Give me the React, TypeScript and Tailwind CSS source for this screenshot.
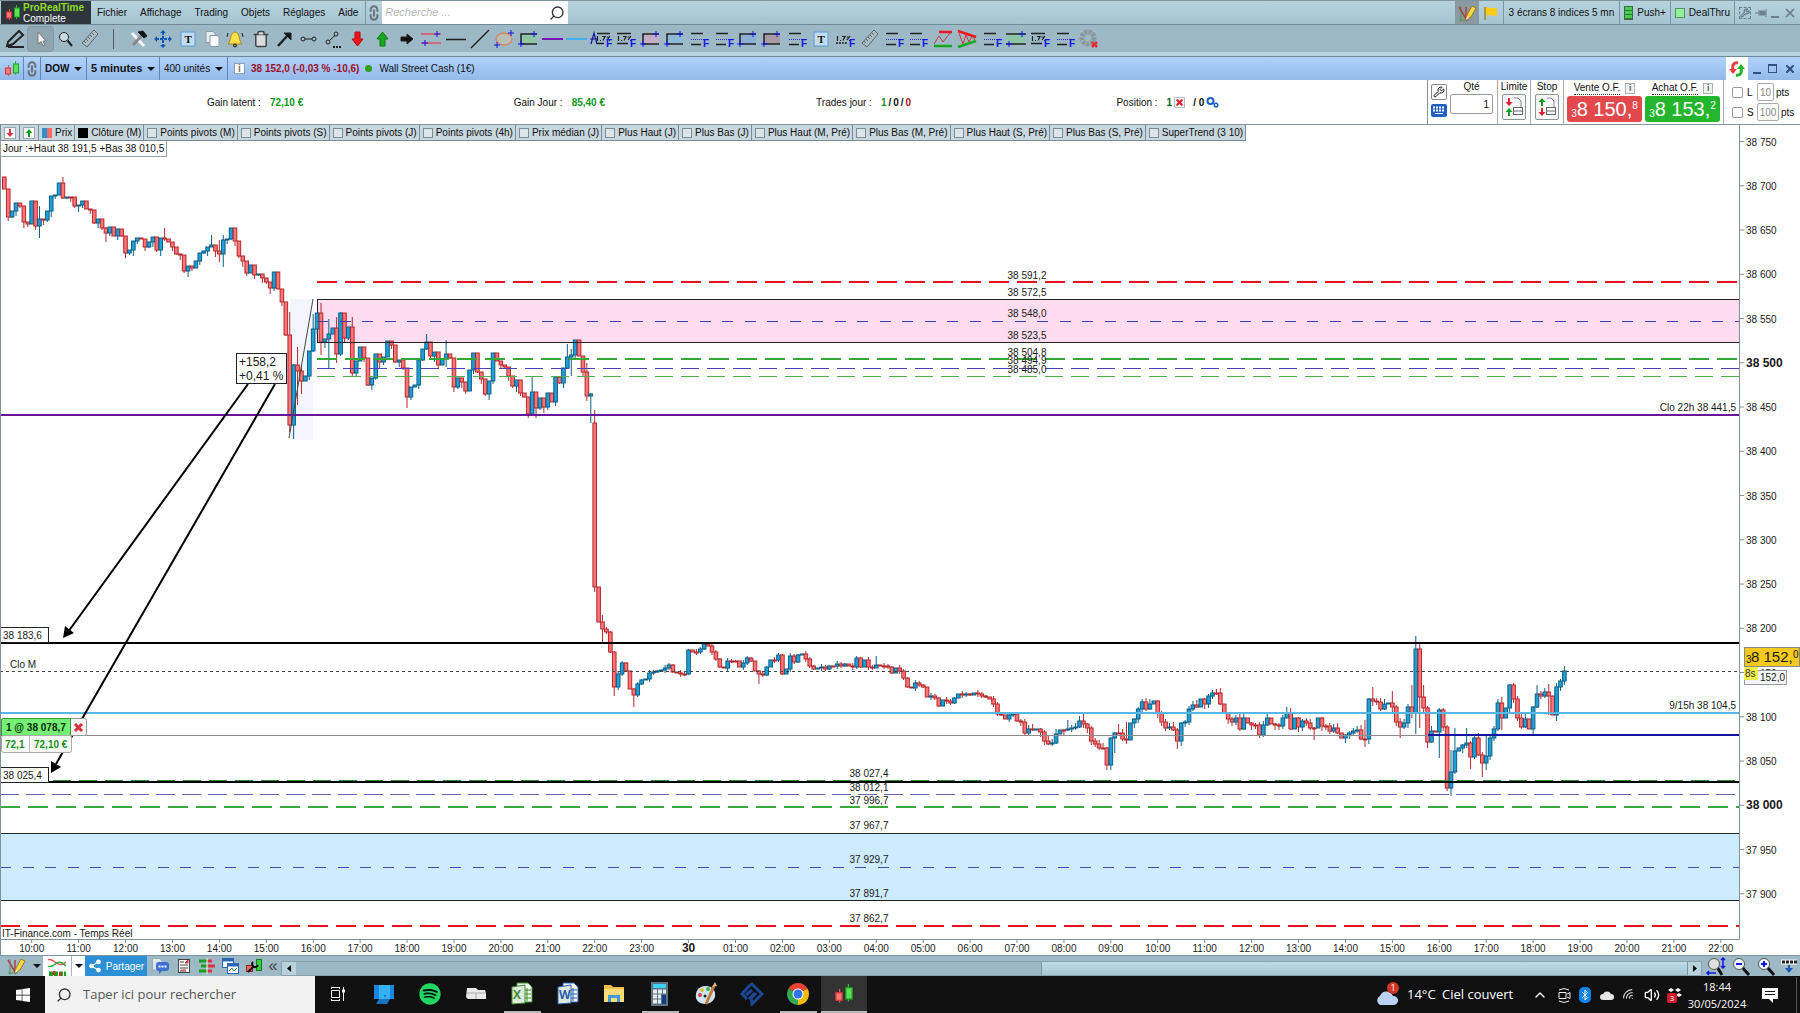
import type { ReactNode } from "react";
import {
  Bluetooth,
  ChevronUp,
  Link2,
  MessageSquareText,
  Search,
  Share2,
  Trash2,
  Volume2,
  Wifi,
  Wrench,
  X,
} from "lucide-react";
import { FaSpotify, FaWindows } from "react-icons/fa";

const SANS = "font-['Liberation_Sans',Arial,sans-serif]";
const SEGOE = "font-['Open_Sans','Noto_Sans',sans-serif]";

/* ---------- price series (chart rows, one value per 5 min close) ---------- */

const FIRST_OPEN = 177;
const CLOSES = [
  189, 217, 211, 203, 206, 222, 224, 201, 226, 219, 220, 211, 196, 195, 183, 198, 197, 197, 206, 205,
  201, 209, 210, 223, 219, 228, 233, 227, 236, 229, 236, 253, 250, 241, 238, 239, 247, 242, 237, 250,
  238, 239, 242, 247, 254, 255, 271, 266, 268, 261, 253, 251, 247, 245, 251, 254, 240, 239, 228, 241,
  256, 261, 273, 265, 275, 274, 278, 282, 288, 272, 289, 302, 335, 425, 365, 371, 381, 376, 351, 329,
  313, 342, 339, 334, 328, 354, 313, 338, 327, 373, 361, 347, 358, 385, 378, 354, 362, 357, 341, 345,
  362, 360, 368, 397, 387, 385, 360, 349, 342, 356, 352, 365, 359, 354, 358, 387, 378, 382, 391, 370,
  353, 372, 379, 394, 381, 353, 361, 365, 367, 376, 386, 380, 393, 397, 414, 392, 408, 398, 407, 393,
  402, 377, 383, 368, 357, 355, 340, 356, 372, 396, 394, 587, 622, 629, 632, 652, 687, 674, 663, 671,
  689, 695, 684, 680, 679, 673, 672, 671, 670, 668, 665, 672, 673, 674, 674, 650, 652, 652, 649, 644,
  646, 652, 659, 667, 668, 661, 661, 661, 667, 663, 658, 661, 671, 674, 675, 667, 660, 660, 655, 674,
  669, 656, 662, 655, 654, 659, 666, 669, 668, 667, 669, 666, 666, 664, 666, 664, 666, 667, 658, 667,
  660, 667, 668, 665, 666, 666, 667, 673, 668, 671, 678, 687, 688, 683, 685, 687, 697, 696, 698, 706,
  700, 701, 703, 698, 694, 695, 694, 695, 693, 694, 696, 697, 699, 704, 714, 715, 719, 715, 714, 721,
  722, 733, 729, 730, 729, 732, 741, 744, 743, 734, 730, 730, 729, 728, 727, 721, 724, 728, 741, 744,
  748, 748, 765, 738, 733, 733, 739, 740, 723, 719, 709, 702, 709, 704, 701, 713, 722, 728, 727, 730,
  741, 723, 722, 709, 705, 707, 699, 704, 696, 693, 693, 704, 713, 719, 722, 718, 729, 718, 723, 725,
  725, 735, 725, 718, 724, 725, 726, 718, 713, 729, 718, 727, 721, 723, 728, 728, 718, 726, 726, 731,
  728, 733, 738, 735, 733, 731, 730, 739, 739, 699, 701, 702, 709, 704, 703, 707, 722, 727, 723, 707,
  713, 649, 697, 708, 742, 731, 732, 710, 727, 788, 772, 751, 748, 745, 743, 757, 738, 755, 763, 756,
  738, 729, 703, 718, 708, 685, 699, 718, 727, 719, 729, 707, 694, 696, 692, 696, 715, 687, 681, 671,
];

// candles that stretch well beyond their body: index -> [high, low]
const WICKS: Record<number, [number, number]> = {
  9: [206, 238], 15: [177, 199], 26: [227, 242], 41: [228, 241], 53: [235, 246], 55: [240, 262],
  56: [235, 267], 73: [312, 432], 74: [364, 439], 75: [347, 405], 76: [366, 394], 79: [314, 352],
  81: [303, 355], 83: [319, 368], 85: [317, 363], 86: [312, 356], 89: [317, 377], 103: [368, 408],
  108: [334, 350], 113: [340, 367], 135: [377, 415], 136: [392, 418], 144: [344, 368],
  145: [349, 376], 149: [363, 401], 150: [393, 423], 151: [410, 592], 153: [615, 642],
  156: [651, 696], 161: [688, 707], 193: [670, 684], 223: [656, 668], 267: [735, 745],
  272: [720, 731], 276: [714, 728], 282: [747, 770], 284: [732, 753], 285: [724, 734],
  287: [722, 744], 300: [728, 749], 328: [707, 718], 335: [727, 740], 348: [720, 747],
  350: [687, 706], 355: [691, 712], 357: [718, 738], 359: [704, 728], 360: [685, 718],
  361: [636, 734], 362: [644, 728], 363: [685, 712], 364: [706, 748], 367: [708, 758],
  369: [725, 791], 370: [750, 796], 371: [728, 774], 374: [728, 748], 375: [741, 769],
  378: [752, 777], 379: [736, 770], 383: [697, 730], 392: [685, 708], 395: [684, 715],
  397: [683, 721], 399: [666, 685],
};

const candles = CLOSES.map((close, i) => {
  let open = i === 0 ? FIRST_OPEN : CLOSES[i - 1];
  if (i === 151) open = 423;
  const spread = i < 150 ? 7 : i < 260 ? 4 : 6;
  const top = Math.min(open, close);
  const bottom = Math.max(open, close);
  const [high, low] = WICKS[i] ?? [top - ((i * 7) % spread), bottom + ((i * 11) % spread)];
  return { x: 4.3 + i * 3.91, top, height: Math.max(1, bottom - top), high, low, up: close < open };
});

const LEVEL_LABELS: [number, number, string][] = [
  [1027, 275, "38 591,2"],
  [1027, 292, "38 572,5"],
  [1027, 313, "38 548,0"],
  [1027, 335, "38 523,5"],
  [1027, 352, "38 504,8"],
  [1027, 360, "38 494,9"],
  [1027, 369, "38 485,0"],
  [869, 773, "38 027,4"],
  [869, 787, "38 012,1"],
  [869, 800, "37 996,7"],
  [869, 825, "37 967,7"],
  [869, 859, "37 929,7"],
  [869, 893, "37 891,7"],
  [869, 918, "37 862,7"],
];

const PRICES = Array.from({ length: 18 }, (_, i) => 38750 - i * 50);

function formatPrice(p: number) {
  return `${Math.floor(p / 1000)} ${String(p % 1000).padStart(3, "0")}`;
}

const HOURS = Array.from({ length: 37 }, (_, i) => {
  const h = (10 + i) % 24;
  return h === 0 ? "30" : `${String(h).padStart(2, "0")}:00`;
});

function Level({
  y,
  x1 = 0,
  color,
  dash,
  width = 1,
}: {
  y: number;
  x1?: number;
  color: string;
  dash?: string;
  width?: number;
}) {
  return (
    <line
      x1={x1}
      x2={1739}
      y1={width === 1 ? y + 0.5 : y}
      y2={width === 1 ? y + 0.5 : y}
      stroke={color}
      strokeWidth={width}
      strokeDasharray={dash}
    />
  );
}

function PriceChart() {
  return (
    <svg
      className={`block h-full w-full overflow-visible ${SANS}`}
      viewBox="0 141 1800 814"
      preserveAspectRatio="none"
      fontSize="10"
      fill="#1a1a1a"
    >
      <g shapeRendering="crispEdges">
        <rect x="290" y="299" width="23" height="141" fill="#f4f6fd" />
        <rect x="317.5" y="299.5" width="1430" height="43" fill="#ffdcef" stroke="#222" />
        <rect x="0.5" y="833.5" width="1740" height="67" fill="#cdecff" stroke="#222" />
        <rect x="1740" y="141" width="60" height="814" fill="#fff" />
      </g>
      {candles.map((c, i) => (
        <g key={i} stroke={c.up ? "#0b5f85" : "#b3282d"} fill={c.up ? "#1f9fd6" : "#fb7476"}>
          <line x1={c.x} x2={c.x} y1={c.high} y2={c.low} />
          <rect x={c.x - 1.8} y={c.top} width="3.6" height={c.height} strokeWidth="1" />
        </g>
      ))}
      <g shapeRendering="crispEdges">
        <Level y={282} x1={317} color="#e8141c" width={2} dash="20 8" />
        <Level y={321} x1={317} color="#4040b4" dash="11 11.5" />
        <Level y={359} x1={317} color="#34a834" width={2} dash="20 8" />
        <Level y={368} x1={317} color="#4a40b8" dash="18 8" />
        <Level y={376} x1={317} color="#4caf4c" dash="18 8" />
        <Level y={342} x1={317} color="#222" />
        <Level y={415} color="#6a1599" width={2} />
        <Level y={643} color="#000" width={2} />
        <Level y={671} color="#444" dash="3 3" />
        <Level y={713} color="#58b6e4" width={2} />
        <Level y={735} color="#8c8c8c" />
        <Level y={735} x1={1428} color="#1414a0" width={2} />
        <Level y={780} x1={53} color="#3a8a3a" dash="18 8" />
        <Level y={782} color="#000" width={2} />
        <Level y={794} color="#6464b4" dash="19 7" />
        <Level y={807} color="#3aa83a" width={2} dash="20 8" />
        <Level y={867} color="#4646b4" dash="11 11.5" />
        <Level y={926} color="#e8141c" width={2} dash="20 8" />
      </g>
      <line x1="313" y1="299" x2="289" y2="438" stroke="#444" strokeWidth="1" />

      <g stroke="#000" strokeWidth="2">
        <line x1="248" y1="384" x2="68" y2="632" />
        <line x1="275" y1="384" x2="56" y2="764" />
      </g>
      <path d="M63 638 L65 626 L74 633 Z" fill="#000" />
      <path d="M51 773 L51 761 L61 767 Z" fill="#000" />

      <rect x="236.5" y="353.5" width="50" height="30" fill="#fff" stroke="#222" />
      <text x="239" y="366" fontSize="12">+158,2</text>
      <text x="239" y="380" fontSize="12">+0,41 %</text>

      {LEVEL_LABELS.map(([x, y, label]) => (
        <text key={label} x={x} y={y + 4} textAnchor="middle">
          {label}
        </text>
      ))}
      <text x="1736" y="411" textAnchor="end">Clo 22h 38 441,5</text>
      <text x="1736" y="709" textAnchor="end">9/15h 38 104,5</text>

      <rect x="0.5" y="627.5" width="48" height="15" fill="#fff" stroke="#222" />
      <text x="3" y="639">38 183,6</text>
      <rect x="0.5" y="767.5" width="48" height="15" fill="#fff" stroke="#222" />
      <text x="3" y="779">38 025,4</text>
      <text x="10" y="668">Clo M</text>

      <rect x="1.5" y="718.5" width="85" height="17" rx="2" fill="#f6f6f6" stroke="#999" />
      <path d="M1.5 735.5 V720 a2 2 0 0 1 2 -1.500 H70.500 V735.500 Z" fill="#74f074" stroke="#3f9a3f" />
      <text x="6" y="731" fontWeight="bold" fill="#0a2a0a">1 @ 38 078,7</text>
      <path d="M75 724 l7 7 m0 -7 l-7 7" stroke="#d8323a" strokeWidth="3" />
      <rect x="1.5" y="735.5" width="70" height="17" rx="2" fill="#fbfbfb" stroke="#aaa" />
      <line x1="29.5" x2="29.5" y1="736" y2="752" stroke="#bbb" />
      <g fontWeight="bold" fill="#14901a">
        <text x="5" y="748">72,1</text>
        <text x="34" y="748">72,10 €</text>
      </g>
      <text x="2" y="937">IT-Finance.com - Temps Réel</text>

      <path d="M0.5 141 V955 M0 939.500 H1739.500 V141" fill="none" stroke="#7e929c" />
      {PRICES.map((p) => {
        const y = 805.3 - (p - 38000) * 0.885;
        const round = p % 500 === 0;
        return (
          <g key={p}>
            <line x1="1740" x2="1744" y1={y} y2={y} stroke="#7e929c" />
            <text x="1746" y={y + 4} fontSize={round ? 12 : 10} fontWeight={round ? "bold" : "normal"}>
              {formatPrice(p)}
            </text>
          </g>
        );
      })}
      {HOURS.map((h, i) => {
        const x = 31.7 + i * 46.92;
        const day = h === "30";
        return (
          <g key={i}>
            <line x1={x} x2={x} y1="940" y2="943" stroke="#7e929c" />
            <text x={x} y="952" textAnchor="middle" fontSize={day ? 12 : 10} fontWeight={day ? "bold" : "normal"}>
              {h}
            </text>
          </g>
        );
      })}

      <rect x="1744.5" y="670.5" width="42" height="14" fill="#f4f6f8" stroke="#999" />
      <text x="1785" y="681" textAnchor="end">152,0</text>
      <rect x="1744" y="667" width="14" height="13" fill="#f4ee50" />
      <text x="1745" y="677" fill="#333">8s</text>
      <rect x="1744.5" y="647.500" width="55" height="19" fill="#f7c81e" stroke="#8a8a8a" />
      <text x="1746" y="663" fontSize="10">3</text>
      <text x="1751" y="662" fontSize="15">8 152,</text>
      <text x="1793" y="658" fontSize="10">0</text>
    </svg>
  );
}

/* ---------- toolbar glyphs, drawn on a 24x20 grid ---------- */

function Glyph({ children }: { children: ReactNode }) {
  return (
    <svg className="h-5 w-6" viewBox="0 0 24 20" fill="none" stroke="#222">
      {children}
    </svg>
  );
}

const FLetter = () => (
  <text x="16" y="18" fontSize="10" fontWeight="bold" fill="#1414e6" stroke="none">F</text>
);

const plus = (x: number, y: number) => <path d={`M${x - 3} ${y} h6 M${x} ${y - 3} v6`} stroke="#1414e6" />;

// tiny percentage caption, only hinted at this size
const scribble = <path d="M4.500 7 v5 M7 11.500 h1 M9 7.500 h3 l-2 4 M13.500 8 h2 M14 11 l3 -4 M16 11.500 h1" strokeWidth="1.200" />;

const levelsF = (
  <Glyph>
    <path d="M4 4.500 H16 M4 15.500 H14" strokeWidth="1.500" />
    <path d="M4 10.500 H17" stroke="#2a2ae0" strokeDasharray="1 1" />
    <FLetter />
  </Glyph>
);

const labelF = (
  <Glyph>
    <path d="M3 4.500 H17 M3 14.500 H14" strokeWidth="1.500" />
    {scribble}
    <FLetter />
  </Glyph>
);

const zone = (fill: string) => (
  <Glyph>
    <rect x="4" y="5" width="16" height="10" fill={fill} stroke="none" />
    <path d="M20 5 H4 V15 H20" strokeWidth="1.500" />
    {plus(17, 5)}
    {plus(4, 15)}
  </Glyph>
);

const ruler = (
  <Glyph>
    <path d="M4 14 L16 1 L20 5 L9 18 Z" fill="#a9bcc4" stroke="#5f686d" />
    <path d="M8 10 l2 2 M10 8 l2 2 M12 6 l2 2 M14 4 l2 2 M6 12 l2 2" stroke="#5f686d" />
  </Glyph>
);

const textTool = (
  <Glyph>
    <rect x="5" y="3" width="14" height="14" fill="#c3dbee" stroke="#5b9bd8" />
    <text x="8.500" y="14" fontSize="11" fontWeight="bold" fill="#111" stroke="none" className="font-['Liberation_Serif',serif]">T</text>
  </Glyph>
);

const TOOLS: [string, ReactNode][] = [
  ["Crayon", <Glyph><path d="M5 13 L16 2 L20 6 L10 15 L4 17 Z M4 17 L9 16" strokeWidth="2" /><path d="M5 18 H21" strokeWidth="2" /></Glyph>],
  ["Pointeur", <Glyph><path d="M9 3 V15 L12 12.500 L14 17 L16 16 L14 12 H17 Z" fill="#f4f4f4" stroke="#777" /></Glyph>],
  ["Zoom", <Glyph><circle cx="10" cy="8" r="4.500" fill="#c8dde4" /><path d="M13.500 11.500 L18 17" strokeWidth="2" /></Glyph>],
  ["Règle", ruler],
  ["Séparateur", <Glyph><path d="M10.500 0 V20" stroke="#4d5c64" /></Glyph>],
  ["Outils", <Glyph><path d="M5 4 L17 17" stroke="#f4f4f4" strokeWidth="3" /><path d="M17 4 L6 16" strokeWidth="3" stroke="#8b8b8b" /><path d="M11 3 L16 2 L20 7 L17 9 Z" fill="#111" /></Glyph>],
  ["Déplacer", <Glyph><path d="M12 3 V17 M5 10 H19" stroke="#1559b8" strokeWidth="2" strokeDasharray="3 1" /><path d="M12 1 l3 3 h-6 Z M12 19 l3 -3 h-6 Z M3 10 l3 -3 v6 Z M21 10 l-3 -3 v6 Z" fill="#1559b8" stroke="none" /></Glyph>],
  ["Texte", textTool],
  ["Copier", <Glyph><path d="M6 2.500 h7 l2 2 v9 h-9 Z" fill="#e8eef0" stroke="#8a9aa2" /><path d="M10 6.500 h7 l2 2 v9 h-9 Z" fill="#fff" stroke="#8a9aa2" /></Glyph>],
  ["Alarme", <Glyph><path d="M4 15 C7 13 6 3 11 3 C16 3 15 13 18 15 Z" fill="#ffe04a" stroke="#a88a10" /><circle cx="11" cy="16.500" r="1.500" fill="#a88a10" /><path d="M4 4 l-1 4 M18 4 l1 4" /></Glyph>],
  ["Supprimer", <Trash2 className="h-[18px] w-[18px] fill-[#d9dddd] text-[#444]" strokeWidth={2} />],
  ["Flèche", <Glyph><path d="M5 17 L15 6" strokeWidth="2.500" /><path d="M11 4 h7 v7 Z" fill="#111" /></Glyph>],
  ["Segment", <Glyph><circle cx="6" cy="10" r="2" /><circle cx="17" cy="10" r="2" /><path d="M8 10 H15" /></Glyph>],
  ["Demi-droite", <Glyph><circle cx="6" cy="13" r="2" /><circle cx="14" cy="5" r="2" /><path d="M7.500 11.500 L13 6.500" /><path d="M11 18 H20" strokeWidth="2" strokeDasharray="2 1" /></Glyph>],
  ["Flèche bas", <Glyph><path d="M9 3 h5 v7 h3 l-5.500 7 l-5.500 -7 h3 Z" fill="#f0141c" stroke="#b00d12" /></Glyph>],
  ["Flèche haut", <Glyph><path d="M9 17 h5 v-7 h3 l-5.500 -7 l-5.500 7 h3 Z" fill="#17a81d" stroke="#0f7a14" /></Glyph>],
  ["Flèche droite", <Glyph><path d="M6 8 h6 v-3 l6 5 l-6 5 v-3 h-6 Z" fill="#111" /></Glyph>],
  ["Canal", <Glyph><path d="M2 5 H22 M2 14 H22" stroke="#d06a78" strokeWidth="2" />{plus(18, 5)}{plus(6, 14)}</Glyph>],
  ["Horizontale", <Glyph><path d="M2 10.500 H22" strokeWidth="1.500" /></Glyph>],
  ["Oblique", <Glyph><path d="M3 19 L21 1" strokeWidth="1.500" /></Glyph>],
  ["Ellipse", <Glyph><ellipse cx="12" cy="10" rx="8" ry="6" fill="#b9bfb8" stroke="#d28a6a" strokeWidth="1.500" />{plus(19, 4)}{plus(5, 16)}</Glyph>],
  ["Zone verte", zone("#8fc4a4")],
  ["Ligne violette", <Glyph><path d="M1 10 H22" stroke="#7a12b8" strokeWidth="2" /></Glyph>],
  ["Ligne bleue", <Glyph><path d="M1 10 H22" stroke="#3fb0ee" strokeWidth="2" /></Glyph>],
  ["Label A", <Glyph><path d="M1 15 L4 4 L7 15 M0 10 H7" stroke="#1414a0" strokeWidth="1.200" /><path d="M7 4.500 H20 M7 14.500 H14" strokeWidth="1.500" /><g transform="translate(3 0)">{scribble}</g><FLetter /></Glyph>],
  ["Label B", labelF],
  ["Zone rose", zone("#c4adc6")],
  ["Zone cyan", zone("#8cbbd8")],
  ["Niveaux 1", levelsF],
  ["Niveaux 2", levelsF],
  ["Zone bleue", zone("#8fb0d6")],
  ["Zone brune", zone("#a89ba4")],
  ["Niveaux 3", levelsF],
  ["Texte 2", textTool],
  ["Label C", <Glyph>{scribble}<path d="M3 14 H14" strokeWidth="1.500" strokeDasharray="2 1" /><FLetter /></Glyph>],
  ["Règle 2", ruler],
  ["Niveaux 4", levelsF],
  ["Niveaux 5", levelsF],
  ["Tendance", <Glyph><path d="M8 3 H21" stroke="#f0141c" strokeWidth="2.500" /><path d="M3 17 H21" stroke="#17a81d" strokeWidth="2.500" /><path d="M3 15 L8 7 L12 13 L19 4" stroke="#c83c3c" /></Glyph>],
  ["Triangle", <Glyph><path d="M3 2 L21 8" stroke="#f0141c" strokeWidth="2.500" /><path d="M3 18 L21 12" stroke="#17a81d" strokeWidth="2.500" /><path d="M4 4 L8 15 L11 6 L14 13 L17 7 L20 11" stroke="#c83c3c" /></Glyph>],
  ["Niveaux 6", levelsF],
  ["Canal vert", <Glyph><rect x="3" y="5" width="18" height="10" fill="#8fc4a4" stroke="none" /><path d="M2 5 H22 M2 15 H22" strokeWidth="1.500" />{plus(18, 5)}{plus(5, 15)}</Glyph>],
  ["Label D", labelF],
  ["Niveaux 7", levelsF],
  ["Réinitialiser", <Glyph><circle cx="11" cy="9" r="6" stroke="#8b969b" strokeWidth="5" strokeDasharray="3 1" /><path d="M15 13 l5 5 m0 -5 l-5 5" stroke="#e03038" strokeWidth="2.500" /></Glyph>],
];

function CandleLogo({ className }: { className: string }) {
  return (
    <svg className={className} viewBox="0 0 16 16">
      <path d="M4.500 4 V15" stroke="#e05555" />
      <rect x="1.500" y="7" width="5" height="6" fill="#f47a7a" stroke="#d33" />
      <path d="M11.500 0 V14" stroke="#35b535" />
      <rect x="9.500" y="3" width="5" height="9" fill="#5ee05e" stroke="#1fa01f" />
    </svg>
  );
}

function ChartPencil() {
  return (
    <svg className="h-5 w-5" viewBox="0 0 20 20" fill="none">
      <path d="M2 17 H12 M4 3 V19" stroke="#4b9b58" />
      <path d="M2 4 L9 16 V4" stroke="#a8434a" strokeWidth="1.500" />
      <path d="M9 17 L10 12 L15 3 L19 5 L14 14 Z" fill="#ffd84a" stroke="#9a7a1c" />
      <path d="M9 17 L10 13 L12 15 Z" fill="#f6e6c0" />
    </svg>
  );
}

const Chain = () => <Link2 className="h-4 w-4 rotate-90 text-[#6b7479]" strokeWidth={3} />;

const Caret = () => (
  <svg className="h-1 w-2" viewBox="0 0 8 4">
    <path d="M0 0 H8 L4 4 Z" fill="#111" />
  </svg>
);

function Divider() {
  return <span className="h-full w-px bg-[#7b97a3]" />;
}

function MenuBar() {
  return (
    <header className="flex h-6 items-center border-t border-[#7f959e] bg-linear-to-b from-[#b7d3df] to-[#a3c3d0]">
      <div className="ml-px flex h-full w-[90px] items-center bg-[#2e363b] pl-1">
        <CandleLogo className="h-4 w-4" />
        <div className="ml-[2px] leading-[11px]">
          <div className="font-bold text-[#8fd92b]">ProRealTime</div>
          <div className="text-white">Complete</div>
        </div>
      </div>
      <nav className="flex gap-[13px] pr-[7px] pl-[6px]">
        {["Fichier", "Affichage", "Trading", "Objets", "Réglages", "Aide"].map((m) => (
          <button key={m} type="button">{m}</button>
        ))}
      </nav>
      <Divider />
      <Chain />
      <label className="flex h-full w-[186px] items-center bg-white px-[3px]">
        <input
          aria-label="Recherche"
          placeholder="Recherche ..."
          className="min-w-0 flex-1 text-[11px] italic outline-none placeholder:text-[#b9b9b9]"
        />
        <Search className="h-4 w-4 -scale-x-100 text-[#333]" strokeWidth={2} />
      </label>
      <div className="ml-auto flex h-full items-center">
        <button type="button" aria-label="Dessin" className="flex h-full w-6 items-center justify-center bg-[#8b9aa1]">
          <ChartPencil />
        </button>
        <button type="button" aria-label="Drapeau" className="flex w-6 justify-center">
          <svg className="h-[14px] w-[14px]" viewBox="0 0 14 14">
            <path d="M1 1 V14" stroke="#a98a1a" strokeWidth="1.500" />
            <path d="M2 1 L7 2 L13 2 V10 L7 9.500 L2 8.500 Z" fill="#ffcb1c" />
          </svg>
        </button>
        <Divider />
        <button type="button" className="px-[5px]">3 écrans 8 indices 5 mn</button>
        <Divider />
        <button type="button" className="flex items-center gap-1 px-1">
          <span className="flex h-[14px] w-[9px] flex-col gap-px border border-[#3d6d45] bg-[#3d6d45]">
            <span className="flex-1 bg-[#43cf4b]" />
            <span className="flex-1 bg-[#43cf4b]" />
            <span className="flex-1 bg-[#43cf4b]" />
          </span>
          Push+
        </button>
        <Divider />
        <button type="button" className="flex items-center gap-1 px-1">
          <span className="h-[10px] w-[10px] border border-[#5c8f66] bg-[#8ff09a]" />
          DealThru
        </button>
        <Divider />
        <div className="flex h-full items-center gap-1 px-1 pr-[3px] text-[#6c818b]">
          <Wrench className="h-3 w-3 border border-dashed border-[#6c818b]" strokeWidth={3} />
          <svg className="h-2 w-3" viewBox="0 0 12 8"><path d="M0 4 H4 M4 1 V7 M5 2 H10 V6 H5 Z M11 0 V8" stroke="#6c818b" fill="#6c818b" /></svg>
          <span className="mt-2 h-[2px] w-2 bg-[#6c818b]" />
          <X className="h-[14px] w-[14px]" strokeWidth={3} />
        </div>
      </div>
    </header>
  );
}

function ToolBar() {
  return (
    <div className="flex h-7 items-center border-t border-[#6f8893] bg-[#9cb9c5] pl-[3px]">
      <div className="flex w-[1098px]">
        {TOOLS.map(([name, glyph], i) => (
          <button
            key={name}
            type="button"
            aria-label={name}
            className={`flex h-[26px] flex-1 items-center justify-center ${i === 1 ? "rounded-sm border border-[#8197a1] bg-[#8fa5af]" : ""}`}
          >
            {glyph}
          </button>
        ))}
      </div>
    </div>
  );
}

function TitleSelect({ value, label, className }: { value: string; label: string; className: string }) {
  return (
    <label className="flex h-full items-center gap-1 border-r border-[#5f87b8] px-1">
      <select aria-label={label} className={`appearance-none bg-transparent outline-none ${className}`}>
        <option>{value}</option>
      </select>
      <Caret />
    </label>
  );
}

function ChartTitle() {
  return (
    <div className="mt-1 flex h-6 items-center border-t border-[#6f8893] bg-linear-to-b from-[#b0d3fd] to-[#93b9ea]">
      <span className="flex h-full w-6 items-center justify-center border-r border-[#5f87b8]">
        <CandleLogo className="h-4 w-4" />
      </span>
      <span className="flex h-full w-[17px] items-center justify-center border-r border-[#5f87b8]">
        <Chain />
      </span>
      <TitleSelect label="Valeur" value="DOW" className="font-bold" />
      <TitleSelect label="Unité de temps" value="5 minutes" className="text-[11px] font-bold" />
      <TitleSelect label="Historique" value="400 unités" className="" />
      <span className="ml-[6px] flex h-[11px] w-[11px] items-center justify-center border border-[#8fa3b5] bg-white font-bold text-[#777]">i</span>
      <span className="ml-[6px] font-bold text-[#a01028]">38 152,0 (-0,03 % -10,6)</span>
      <span className="ml-[6px] h-[7px] w-[7px] rounded-full bg-[#2f9e12]" />
      <span className="ml-[7px]">Wall Street Cash (1€)</span>
      <div className="ml-auto flex h-full items-center">
        <button type="button" aria-label="Actualiser" className="flex h-full w-[22px] items-center justify-center bg-white">
          <svg className="h-4 w-[18px]" viewBox="0 0 18 16" fill="none" strokeWidth="3">
            <path d="M10 2 C5 1 4 5 5 10" stroke="#ee4040" />
            <path d="M1 8 H9 L5 13 Z" fill="#ee4040" />
            <path d="M8 14 C13 15 14 11 13 7" stroke="#1eb32b" />
            <path d="M9 8 H17 L13 3 Z" fill="#1eb32b" />
          </svg>
        </button>
        <div className="flex w-[52px] items-center justify-center gap-[7px] text-[#31507c]">
          <span className="mt-2 h-[2px] w-2 bg-[#31507c]" />
          <span className="h-[9px] w-[9px] border border-t-2 border-[#31507c]" />
          <X className="h-3 w-3" strokeWidth={4} />
        </div>
      </div>
    </div>
  );
}

function Info() {
  return (
    <span className="flex h-[11px] w-[10px] items-center justify-center border border-[#aab2b6] bg-[#f2f2f2] text-[9px] leading-none font-bold text-[#666]">i</span>
  );
}

function Stat({ label, children }: { label: string; children: ReactNode }) {
  return (
    <div className="flex flex-1 items-center justify-center gap-[9px]">
      <span>{label}</span>
      <span className="flex items-center gap-[2px] font-bold">{children}</span>
    </div>
  );
}

function OrderType({ label, first, second }: { label: string; first: string; second: string }) {
  return (
    <div className="flex h-full w-[33px] flex-col items-center border-r border-[#aaa]">
      <span className="leading-[14px]">{label}</span>
      <button type="button" aria-label={label} className="flex h-[26px] w-6 items-center justify-center rounded-xs border border-[#8b959a] bg-[#f7f7f7]">
        <svg className="h-5 w-5" viewBox="0 0 20 20" fill="none">
          <path d="M10 1 H14 L17 4 V10" stroke="#889" />
          <rect x="9.500" y="10.500" width="9" height="7" fill="#fff" stroke="#667" />
          <path d="M9 14 H19" stroke="#667" />
          <path d={label === "Limite" ? "M5 9 L1.500 5 H4 V1 H6 V5 H8.500 Z" : "M5 1 L1.500 5 H4 V9 H6 V5 H8.500 Z"} fill={first} />
          <path d={label === "Limite" ? "M5 11 L1.500 15 H4 V19 H6 V15 H8.500 Z" : "M5 19 L1.500 15 H4 V11 H6 V15 H8.500 Z"} fill={second} />
        </svg>
      </button>
    </div>
  );
}

function Quote({ side, big, tenth, className }: { side: string; big: string; tenth: string; className: string }) {
  return (
    <div className="flex flex-col">
      <div className="flex h-4 items-center justify-center gap-[5px]">
        <span className="border-b border-dotted border-[#333] leading-3">{side}</span>
        <Info />
      </div>
      <button type="button" className={`flex h-[26px] w-[75px] items-center justify-center rounded-[3px] text-white ${className}`}>
        <span className="mt-2">3</span>
        <span className="text-[20px]">{big}</span>
        <span className="mb-2">{tenth}</span>
      </button>
    </div>
  );
}

function Offset({ name, value, className }: { name: string; value: string; className: string }) {
  return (
    <div className="flex h-5 items-center">
      <label className="flex w-[25px] items-center gap-1">
        <input type="checkbox" className="h-[11px] w-[11px] appearance-none rounded-[2px] border border-[#999] bg-white" />
        {name}
      </label>
      <input
        aria-label={`${name} points`}
        defaultValue={value}
        className={`h-[18px] rounded-[2px] border border-[#aaa] text-center text-[#888] outline-none ${className}`}
      />
      <span className="ml-[2px]">pts</span>
    </div>
  );
}

function TradePanel() {
  return (
    <div className="flex h-[45px] border-b border-[#8796a0] bg-white">
      <div className="flex flex-1 items-center pr-[107px] pl-[103px]">
        <Stat label="Gain latent :">
          <span className="text-[#0e9a1d]">72,10 €</span>
        </Stat>
        <Stat label="Gain Jour :">
          <span className="text-[#0e9a1d]">85,40 €</span>
        </Stat>
        <Stat label="Trades jour :">
          <span className="text-[#0e9a1d]">1</span>/<span>0</span>/<span className="text-[#b01020]">0</span>
        </Stat>
        <Stat label="Position :">
          <span className="text-[#0a6a14]">1</span>
          <span className="flex h-[11px] w-[11px] items-center justify-center border border-[#b9b9c9]">
            <X className="h-[9px] w-[9px] text-[#e02030]" strokeWidth={6} />
          </span>
          <span className="ml-[6px]">/ 0</span>
          <svg className="h-3 w-[13px]" viewBox="0 0 13 12" fill="none" stroke="#1b5fc0">
            <circle cx="4.500" cy="5" r="3" strokeWidth="2" />
            <circle cx="10" cy="9" r="1.800" strokeWidth="1.500" />
          </svg>
        </Stat>
      </div>
      <div className="flex w-[373px] border-l border-[#8796a0] pl-[3px]">
        <div className="flex w-4 flex-col gap-1 pt-1">
          <button type="button" aria-label="Configurer" className="flex h-4 w-4 items-center justify-center rounded-[2px] border border-[#888]">
            <Wrench className="h-3 w-3" strokeWidth={2} />
          </button>
          <button type="button" aria-label="Clavier" className="h-[13px] w-4 rounded-[2px] bg-[#1f5fc0] p-[2px]">
            <svg className="h-full w-full" viewBox="0 0 12 9">
              <path d="M0 1.500 H12 M0 4.500 H12" stroke="#fff" strokeWidth="2" strokeDasharray="2 1" />
              <path d="M2 7.500 H10" stroke="#fff" />
            </svg>
          </button>
        </div>
        <label className="ml-[3px] flex w-[48px] flex-col items-center border-r border-[#aaa] pr-1">
          <span className="leading-[14px]">Qté</span>
          <input defaultValue="1" className="h-5 w-[43px] rounded-[2px] border border-[#999] pr-[3px] text-right outline-none" />
        </label>
        <OrderType label="Limite" first="#e02030" second="#14a01e" />
        <OrderType label="Stop" first="#14a01e" second="#e02030" />
        <div className="flex gap-[3px] pr-[3px] pl-[3px]">
          <Quote side="Vente O.F." big="8 150," tenth="8" className="bg-[#e2484c]" />
          <Quote side="Achat O.F." big="8 153," tenth="2" className="bg-[#23b52b]" />
        </div>
        <div className="flex flex-col justify-between border-l border-[#aaa] py-[2px] pl-[8px]">
          <Offset name="L" value="10" className="w-[17px]" />
          <Offset name="S" value="100" className="w-[22px]" />
        </div>
      </div>
    </div>
  );
}

const INDICATORS = [
  "Points pivots (M)",
  "Points pivots (S)",
  "Points pivots (J)",
  "Points pivots (4h)",
  "Prix médian (J)",
  "Plus Haut (J)",
  "Plus Bas (J)",
  "Plus Haut (M, Pré)",
  "Plus Bas (M, Pré)",
  "Plus Haut (S, Pré)",
  "Plus Bas (S, Pré)",
  "SuperTrend (3 10)",
];

const CHIP = "flex h-full items-center gap-[3px] border-r border-[#7c8d96] pr-[3px] pl-[3px]";
const CHIP_TIGHT = "flex h-full items-center gap-[3px] border-r border-[#7c8d96] pr-[2px] pl-[3px]";

function ArrowChip({ up }: { up: boolean }) {
  return (
    <button type="button" aria-label={up ? "Monter" : "Descendre"} className={CHIP}>
      <svg className="h-3 w-3" viewBox="0 0 12 12">
        <rect x="0.500" y="0.500" width="11" height="11" fill="#fff" stroke="#98a6ad" />
        <path d={up ? "M6 2 L9.500 6 H7 V10 H5 V6 H2.500 Z" : "M6 10 L9.500 6 H7 V2 H5 V6 H2.500 Z"} fill={up ? "#14a01e" : "#e03040"} />
      </svg>
    </button>
  );
}

function IndicatorRow() {
  return (
    <div className="flex h-4 justify-between">
      <div className="flex border-b border-l border-[#7c8d96] bg-[#c9d7de]">
        <ArrowChip up={false} />
        <ArrowChip up />
        <div className={CHIP_TIGHT}>
          <span className="flex h-[10px] w-[10px]">
            <span className="flex-1 bg-[#2f8fc8]" />
            <span className="flex-1 bg-[#f56a6a]" />
          </span>
          Prix
        </div>
        <div className={CHIP_TIGHT}>
          <span className="h-[10px] w-[10px] bg-black" />
          Clôture (M)
        </div>
        {INDICATORS.map((name) => (
          <label key={name} className={CHIP_TIGHT}>
            <input type="checkbox" className="h-[10px] w-[10px] appearance-none border border-[#7c8d96] bg-[#dce6ea]" />
            {name}
          </label>
        ))}
      </div>
      <div className="w-[61px] border-l border-[#7e929c]" />
    </div>
  );
}

function ZoomIcon({ sign }: { sign: string }) {
  return (
    <svg className="h-5 w-5" viewBox="0 0 20 20">
      <path d="M11 11 L18 19" stroke="#111" strokeWidth="3" />
      <circle cx="8" cy="8" r="5.500" fill="#eef4f6" stroke="#555" />
      <path d={sign} stroke="#1414e6" strokeWidth="2" />
    </svg>
  );
}

function BottomBar() {
  return (
    <div className="flex h-[21px] items-center border-t border-[#7b97a3] bg-[#9cb9c5]">
      <button type="button" aria-label="Dessins" className="flex w-[31px] justify-center">
        <ChartPencil />
      </button>
      <button type="button" aria-label="Plus de dessins" className="flex w-3 justify-center">
        <Caret />
      </button>
      <button type="button" aria-label="Indicateurs" className="flex h-full w-7 items-center justify-center bg-white">
        <svg className="h-5 w-5" viewBox="0 0 20 20" fill="none">
          <path d="M1 4 C6 0 10 14 19 6" stroke="#e05050" strokeWidth="1.500" />
          <path d="M1 10 C6 14 10 0 19 10" stroke="#2fae3c" strokeWidth="1.500" />
          <path d="M2 18 H19" stroke="#16a01e" strokeWidth="5" strokeDasharray="4 1" />
          <path d="M7 15 v4 M13 16 v4" stroke="#e02828" strokeWidth="2" />
        </svg>
      </button>
      <button type="button" aria-label="Plus d'indicateurs" className="flex h-full w-[14px] items-center justify-center border-l border-[#9cb9c5] bg-white">
        <Caret />
      </button>
      <button type="button" className="flex h-full w-[62px] items-center justify-center gap-1 bg-[#2b90d6] text-white">
        <Share2 className="h-[14px] w-[14px] fill-white" strokeWidth={2} />
        Partager
      </button>
      <div className="flex items-center pl-[2px]">
        <svg className="h-4 w-[23px]" viewBox="0 0 23 16">
          <path d="M3.500 0.500 H11 L13 3 V12 H3.500 Z" fill="#dfe8ec" stroke="#9aabb2" />
          <rect x="7" y="4" width="13" height="9" rx="3" fill="#3f6fd0" />
          <path d="M10 12 V16 L14 12 Z" fill="#3f6fd0" />
          <path d="M9.500 8.500 H18" stroke="#fff" strokeWidth="2" strokeDasharray="2 1" />
        </svg>
        <svg className="h-4 w-[23px]" viewBox="0 0 23 16">
          <rect x="6.500" y="1.500" width="11" height="13" fill="#fff" stroke="#444" />
          <path d="M8 4 H12 M8 7 H16 M8 10 H16 M8 13 H14" stroke="#444" />
          <path d="M13 5 l3 -3 v3 Z M9 12 h5" stroke="#e03040" fill="#e03040" />
        </svg>
        <svg className="h-4 w-[23px]" viewBox="0 0 23 16">
          <path d="M4 3 H12 M6 8 H12 M4 13 H12" stroke="#14a01e" strokeWidth="3" />
          <path d="M12 3 H17 M12 8 H20 M12 13 H17" stroke="#e03040" strokeWidth="3" />
          <path d="M12 0 V16" stroke="#fff" />
        </svg>
        <svg className="h-4 w-6" viewBox="0 0 24 16">
          <rect x="4.500" y="0.500" width="11" height="9" fill="#fff" stroke="#2a66b8" />
          <path d="M4 2 H16" stroke="#2a66b8" strokeWidth="3" />
          <rect x="9.500" y="5.500" width="11" height="10" fill="#fff" stroke="#2a66b8" />
          <path d="M9 7 H21" stroke="#2a66b8" strokeWidth="3" />
          <path d="M11 13 l3 -3 l2 3 l3 -3" stroke="#2a9a3a" fill="none" />
        </svg>
        <svg className="h-4 w-[23px]" viewBox="0 0 23 16">
          <rect x="4.500" y="7.500" width="6" height="6" fill="#f06a6a" stroke="#a02020" />
          <rect x="14.500" y="1.500" width="5" height="11" fill="#35cf3d" stroke="#1a7a20" />
          <path d="M6 14 L12 8 M11 4 a3 3 0 1 0 5 3" stroke="#111" strokeWidth="2" fill="none" />
        </svg>
      </div>
      <span className="w-4 text-center text-[16px] leading-none text-[#444]">«</span>
      <div className="mt-1 flex h-[15px] flex-1 border border-[#86a3af] bg-[#9cb9c5]">
        <button type="button" aria-label="Gauche" className="flex w-[14px] items-center justify-center bg-[#b9d3dd]">
          <svg className="h-[7px] w-1" viewBox="0 0 4 7"><path d="M4 0 V7 L0 3.500 Z" fill="#111" /></svg>
        </button>
        <div className="flex-[746]" />
        <div className="flex-[645] border-l border-[#7b97a3] bg-linear-to-b from-[#bfdde6] to-[#a4c5d1]" />
        <button type="button" aria-label="Droite" className="flex w-[14px] items-center justify-center border-l border-[#7b97a3] bg-[#b9d3dd]">
          <svg className="h-[7px] w-1" viewBox="0 0 4 7"><path d="M0 0 V7 L4 3.500 Z" fill="#111" /></svg>
        </button>
      </div>
      <div className="flex w-[98px] items-center justify-between pr-[3px] pl-1">
        <svg className="h-5 w-5" viewBox="0 0 20 20">
          <path d="M11 11 L16 19" stroke="#111" strokeWidth="3" />
          <circle cx="8" cy="8" r="5.500" fill="#e0e0e0" stroke="#555" />
          <path d="M17 3 V11 M15 4 l2 -2 l2 2 M15 10 l2 2 l2 -2 M2 17 H10 M3 15 l-2 2 l2 2" stroke="#1414e6" strokeWidth="1.500" fill="none" />
        </svg>
        <ZoomIcon sign="M5 8 H11" />
        <ZoomIcon sign="M5 8 H11 M8 5 V11" />
        <svg className="h-4 w-4" viewBox="0 0 16 16">
          <path d="M0 4 H16" stroke="#fff" strokeWidth="5" />
          <path d="M1 4 H16" stroke="#222" strokeWidth="3" strokeDasharray="3 1" />
          <path d="M8 15 L4 10 H7 V7 H9 V10 H12 Z" fill="#1559b8" />
        </svg>
      </div>
    </div>
  );
}

const officeIcon = (letter: string, color: string) => (
  <svg className="h-6 w-6" viewBox="0 0 24 24">
    <path d="M7 1 H18 L22 5 V20 H7 Z" fill="#f2f6f2" stroke={color} />
    <path d="M12 8 H21 M12 12 H21 M12 16 H21 M17 6 V19" stroke={color} />
    <path d="M2 5 L15 3 V21 L2 22 Z" fill="#dfeadd" stroke={color} />
    <text x="3" y="17" fontSize="12" fontWeight="bold" fill={color}>{letter}</text>
  </svg>
);

const APPS: { name: string; open?: boolean; active?: boolean; icon: ReactNode }[] = [
  {
    name: "Affichage des tâches",
    icon: (
      <svg className="h-4 w-4" viewBox="0 0 16 16" fill="none" stroke="#eee">
        <path d="M1 1.500 H10 M1 14.500 H10 M1.500 4.500 H9.500 V11.500 H1.500 Z M1.500 1 V3 M9.500 1 V3 M1.500 13 V15 M9.500 13 V15 M13.500 1 V15" />
        <path d="M12 5 H15" strokeWidth="3" />
      </svg>
    ),
  },
  {
    name: "Bureau",
    icon: (
      <svg className="h-6 w-6" viewBox="0 0 24 24">
        <rect x="2" y="3" width="20" height="14" fill="#1c86dc" />
        <rect x="7" y="3" width="11" height="14" fill="#35b2f4" />
        <path d="M7 17 H18 L15 22 H4 Z" fill="#1672c4" />
        <circle cx="13" cy="14" r="1" fill="#0f5fae" />
      </svg>
    ),
  },
  { name: "Spotify", icon: <FaSpotify className="h-[22px] w-[22px] text-[#1ed760]" /> },
  {
    name: "Numérisation",
    icon: (
      <svg className="h-5 w-6" viewBox="0 0 24 20">
        <path d="M3 4 H12 L14 6 H21 L22 9 V15 H4 L2 13 Z" fill="#e9e9e9" />
        <path d="M3 9 H22 M12 9 V15" stroke="#aaa" />
      </svg>
    ),
  },
  { name: "Excel", open: true, icon: officeIcon("X", "#3f8f2f") },
  { name: "Word", icon: officeIcon("W", "#2c5fb3") },
  {
    name: "Explorateur",
    icon: (
      <svg className="h-5 w-6" viewBox="0 0 24 20">
        <path d="M2 1 H9 L11 3 H22 V18 H2 Z" fill="#f3c14a" />
        <path d="M2 5 H22 V18 H2 Z" fill="#ffdc78" />
        <path d="M6 18 V11 H18 V18 H15 V14 H9 V18 Z" fill="#3f9bdc" />
      </svg>
    ),
  },
  {
    name: "Calculatrice",
    open: true,
    icon: (
      <svg className="h-6 w-5" viewBox="0 0 20 24">
        <rect x="1" y="0" width="17" height="24" fill="#5d7486" />
        <rect x="3" y="2" width="13" height="4" fill="#3fd0f4" />
        <path d="M3 9.500 H16 M3 14.500 H11 M3 19.500 H11" stroke="#e4eaee" strokeWidth="4" strokeDasharray="4 1" />
        <rect x="12" y="13" width="4" height="9" fill="#123f86" />
      </svg>
    ),
  },
  {
    name: "Paint",
    icon: (
      <svg className="h-6 w-6" viewBox="0 0 24 24">
        <path d="M12 4 C4 4 1 10 2 16 C4 24 18 24 21 15 C22 8 18 4 12 4 Z" fill="#cfe4f2" />
        <circle cx="6" cy="13" r="2" fill="#d94040" />
        <circle cx="8" cy="8" r="2" fill="#e0c030" />
        <circle cx="14" cy="7" r="2" fill="#3fae4a" />
        <circle cx="11" cy="14" r="1.500" fill="#223" />
        <path d="M12 22 L20 4" stroke="#c07a3a" strokeWidth="3" />
        <path d="M18 5 L21 0 L23 4 Z" fill="#e8b07a" />
      </svg>
    ),
  },
  {
    name: "Courtier",
    icon: (
      <svg className="h-6 w-6" viewBox="0 0 24 24" fill="none" stroke="#1c4796" strokeWidth="3">
        <path d="M10 3 L2 12 L7 17 M10 3 L12 2 L22 12 L12 22 L11 16 L16 11" />
        <path d="M6 13 L12 8 M9 17 L15 11" />
      </svg>
    ),
  },
  {
    name: "Chrome",
    open: true,
    icon: (
      <svg className="h-6 w-6" viewBox="0 0 24 24">
        <path d="M12 12 L2.500 6.500 A11 11 0 0 1 21.500 6.500 Z" fill="#ea4335" />
        <path d="M12 12 L21.500 6.500 A11 11 0 0 1 12 23 Z" fill="#fbbc05" />
        <path d="M12 12 L12 23 A11 11 0 0 1 2.500 6.500 Z" fill="#34a853" />
        <circle cx="12" cy="12" r="5.500" fill="#fff" />
        <circle cx="12" cy="12" r="4.500" fill="#2f74e8" />
      </svg>
    ),
  },
  { name: "ProRealTime", open: true, active: true, icon: <CandleLogo className="h-5 w-5" /> },
];

function TaskBar() {
  return (
    <footer className={`flex h-[37px] items-stretch bg-[#101010] text-white ${SEGOE}`}>
      <button type="button" aria-label="Démarrer" className="flex w-[45px] items-center justify-center">
        <FaWindows className="h-4 w-4" />
      </button>
      <label className="flex w-[270px] items-center gap-[11px] bg-[#f2f2f2] pl-[11px] text-[#333]">
        <Search className="h-4 w-4 -scale-x-100" strokeWidth={2} />
        <input
          aria-label="Rechercher"
          placeholder="Taper ici pour rechercher"
          className="min-w-0 flex-1 text-[13px] outline-none placeholder:text-[#555]"
        />
      </label>
      {APPS.map((app) => (
        <button
          key={app.name}
          type="button"
          aria-label={app.name}
          className={`flex w-[46px] flex-col items-center ${app.active ? "bg-[#333333]" : ""}`}
        >
          <span className="flex flex-1 items-center">{app.icon}</span>
          <span className={`h-[2px] ${app.active ? "w-full" : "w-[37px]"} ${app.open ? "bg-[#b8b8b8]" : ""}`} />
        </button>
      ))}
      <div className="ml-auto flex items-center">
        <div className="flex items-center">
          <div className="relative mr-2">
            <svg className="h-6 w-6" viewBox="0 0 24 24">
              <path d="M5 22 a5 5 0 0 1 0 -9 a7 7 0 0 1 13 0 a4.500 4.500 0 0 1 1 9 Z" fill="#b9d2f4" />
            </svg>
            <span className="absolute -top-px right-0 flex h-3 w-3 items-center justify-center rounded-full bg-[#d03422] text-[9px]">1</span>
          </div>
          <span className="w-[35px] text-[13px]">14°C</span>
          <span className="w-[90px] text-[13px] whitespace-nowrap">Ciel couvert</span>
        </div>
        <div className="flex w-[151px] items-center justify-between">
          <ChevronUp className="h-4 w-4" />
          <svg className="h-4 w-4" viewBox="0 0 16 16" fill="none" stroke="#eee">
            <path d="M3 5.500 H10 V11.500 H3 Z M11 7 L14 5.500 V11.500 L11 10 M3 3 Q8 0 13 3 M3 14 Q8 17 13 14" />
          </svg>
          <span className="flex h-4 w-3 items-center justify-center rounded-[5px] bg-[#0a84f0]">
            <Bluetooth className="h-3 w-3" strokeWidth={2} />
          </span>
          <svg className="h-3 w-4" viewBox="0 0 16 12">
            <path d="M4 11 a3 3 0 0 1 0 -6 a4.500 4.500 0 0 1 8 0 a3 3 0 0 1 0 6 Z" fill="#e6e6e6" />
          </svg>
          <Wifi className="h-[14px] w-[14px] -rotate-45 text-[#ccc]" />
          <Volume2 className="h-4 w-4" strokeWidth={2} />
          <span className="relative flex h-4 w-4">
            <svg className="h-4 w-4" viewBox="0 0 16 16" fill="#fff">
              <path d="M4 1 l3 2 l-3 2 l-3 -2 Z M11 1 l3 2 l-3 2 l-3 -2 Z M12 6 l3 2 l-3 2 l-3 -2 Z" />
            </svg>
            <span className="absolute bottom-0 left-0 flex h-[10px] w-[10px] items-center justify-center rounded-[2px] bg-[#d01c2c] text-[8px]">3</span>
          </span>
        </div>
        <div className="w-[68px] text-center text-[11px] leading-[17px]">
          <div>18:44</div>
          <div>30/05/2024</div>
        </div>
        <button type="button" aria-label="Notifications" className="ml-1 flex w-[30px] justify-center">
          <svg className="h-4 w-4" viewBox="0 0 16 16">
            <path d="M0 1 H16 V12 H11 V16 L7 12 H0 Z" fill="#fff" />
            <path d="M3 4.500 H13 M3 7.500 H13" stroke="#111" />
          </svg>
        </button>
        <span className="ml-[11px] h-9 w-px bg-[#555]" />
        <span className="w-[3px]" />
      </div>
    </footer>
  );
}

export default function App() {
  return (
    <div className={`flex h-screen flex-col overflow-hidden bg-[#b7d3df] text-[10px] text-[#111] ${SANS}`}>
      <MenuBar />
      <ToolBar />
      <ChartTitle />
      <TradePanel />
      <main className="flex min-h-0 flex-1 flex-col bg-white">
        <IndicatorRow />
        <div className="relative min-h-0 flex-1">
          <PriceChart />
          <div className="absolute top-0 left-0 border border-t-0 border-[#9aa5ab] bg-white px-[2px] leading-[15px]">
            Jour :+Haut 38 191,5 +Bas 38 010,5
          </div>
        </div>
      </main>
      <BottomBar />
      <TaskBar />
    </div>
  );
}
